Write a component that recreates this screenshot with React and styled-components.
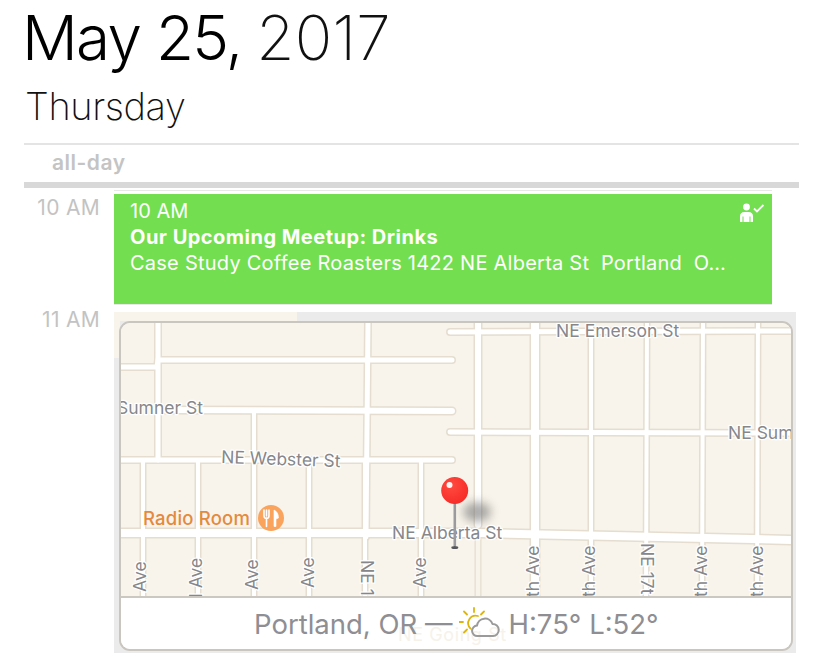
import React from "react";
import styled, { createGlobalStyle } from "styled-components";

const Global = createGlobalStyle`
  html, body { margin: 0; padding: 0; background: #fff; overflow: hidden; }
  body { font-family: Inter, "Liberation Sans", sans-serif; }
`;
const Page = styled.div`
  width: 826px; height: 653px; display: flex; flex-direction: column;
  box-sizing: border-box; padding: 0 27px 0 24px; overflow: hidden;
`;
const Title = styled.h1`
  margin: 0; height: 80px; font-size: 62px; line-height: 76px; font-weight: 360;
  letter-spacing: -1.7px; color: #000; white-space: nowrap; margin-left: -2px;
`;
const Year = styled.span`font-weight: 200; color: #111; letter-spacing: 0.2px; margin-left: -1px;`;
const Day = styled.h2`
  margin: 0; height: 63px; font-size: 38px; line-height: 52px; font-weight: 200;
  letter-spacing: -0.4px; color: #111; padding-left: 1px;
`;
const AllDay = styled.div`
  border-top: 2px solid #e4e4e4; border-bottom: 6px solid #d8d8d8;
  padding-left: 28px; font-size: 21px; line-height: 36px; font-weight: 600;
  color: #c4c4c4; height: 37px; letter-spacing: 0.5px;
`;
const Grid = styled.div`
  display: grid; grid-template-columns: 76px 1fr; column-gap: 14px; flex: 1;
  grid-template-rows: 124px 341px;
`;
const Hour = styled.div`
  text-align: right; font-size: 21px; color: #c3c3c3; line-height: 22px;
  margin-top: ${p => p.$top}px; letter-spacing: 0.3px; font-weight: 400;
`;
const EventSlot = styled.div`
  padding-top: 3px;
`;
const Event = styled.div`
  position: relative; width: 658px; height: 110px; box-sizing: border-box;
  background: #72de50; color: #fff; padding: 4px 44px 0 16px; font-size: 20px;
  line-height: 26px; box-shadow: 0 -3px 0 0 #fff, 0 -4px 0 0 #e8e8e8, 0 1px 0 #e8e8e8;
  margin-top: 3px;
`;
const EventTime = styled.div`letter-spacing: 0;`;
const EventTitle = styled.div`font-weight: 700; letter-spacing: 0.48px; font-size: 20px;`;
const EventPlace = styled.div`
  white-space: pre; overflow: hidden; text-overflow: ellipsis; letter-spacing: 0.24px;
  width: 596px;
`;
const Attendee = styled.svg`position: absolute; top: 8px; right: 6px;`;
const MapFrame = styled.div`
  width: 682px; height: 341px; box-sizing: border-box; padding: 9px 3px 2px 5px; display: flex;
  background:
    linear-gradient(#f8f4eb, #f8f4eb) 0 0 / 183px 9px no-repeat,
    linear-gradient(#f8f4eb, #f8f4eb) 0 0 / 6px 46px no-repeat,
    #ebebeb;
`;
const MapCard = styled.div`
  flex: 1; display: flex; flex-direction: column; border: 2px solid #c9c6c0; border-radius: 11px;
  overflow: hidden; background: #f8f4eb;
`;
const MapSvg = styled.svg`display: block; width: 670px; height: 273px; flex: none;`;
const Footer = styled.div`
  position: relative; isolation: isolate; flex: 1; background: #fff; border-top: 2px solid #cbc8c2;
  display: flex; align-items: center; font-size: 27.5px; color: #8e8e93; padding-left: 133px;
  white-space: nowrap;
`;
const Ghost = styled.span`
  position: absolute; z-index: -1; left: 277px; top: 26px; font-size: 18px; color: #f6f2ea; letter-spacing: 0.6px;
`;
const Temp = styled.span`margin-left: 9px;`;
const Dash = styled.span``;
const Weather = styled.svg`flex: none; margin-left: 6px; margin-top: -2px;`;

const roads = [
  ["M119 367H157L158 360L452 360", 5],
  ["M160 410L452 411", 6],
  ["M119 460H452", 5],
  ["M450 332L792 331", 5],
  ["M450 432L792 433", 5],
  ["M119 533L480 533L792 540", 8],
  ["M158 320L158 460", 5],
  ["M368 320L366 537", 5],
  ["M254 410L254 600", 4],
  ["M143 460L143 600", 4],
  ["M198 460L198 600", 4],
  ["M309 460L309 600", 4],
  ["M365 460L365 600", 4],
  ["M421 460L421 600", 4],
  ["M478 320V525", 6],
  ["M535 320V600", 8],
  ["M591 320L591 600", 4],
  ["M647 320L646 600", 4],
  ["M703 320L702 600", 4],
  ["M758 320L757 600", 4],
];
const labels = [
  ["NE Emerson St", 556, 337, 0],
  ["Sumner St", 117, 414, 0],
  ["NE Webster St", 221, 463, 2],
  ["NE Sum", 728, 439, 0],
  ["NE Alberta St", 392, 539, 0],
];
const sideLabels = [
  ["Ave", 146, 592, -90], ["d Ave", 202, 604, -90], ["Ave", 258, 590, -90], ["Ave", 314, 588, -90],
  ["NE 1", 361, 560, 90], ["Ave", 426, 588, -90],
  ["th Ave", 539, 597, -90], ["th Ave", 595, 597, -90], ["NE 17t", 641, 543, 90],
  ["th Ave", 707, 597, -90], ["th Ave", 763, 597, -90],
];
const Road = styled.path`fill: none; stroke-linecap: round;`;
const Street = styled.text`
  font-family: Inter, "Liberation Sans", sans-serif; font-size: 17.5px; fill: #87878a;
  stroke: #fff; stroke-width: 2.5px; paint-order: stroke; stroke-linejoin: round;
`;
const Place = styled.text`
  font-family: Inter, "Liberation Sans", sans-serif; font-size: 18.5px; font-weight: 500; fill: #e58a3c;
  letter-spacing: 0.2px;
`;

function PlaceMap() {
  return (
    <MapSvg viewBox="121 323 670 273">
      <defs>
        <filter id="blur" x="-50%" y="-50%" width="200%" height="200%"><feGaussianBlur stdDeviation="5" /></filter>
        <radialGradient id="ball" cx="38%" cy="32%" r="75%">
          <stop offset="0" stopColor="#ff4a40" /><stop offset="1" stopColor="#f62a26" />
        </radialGradient>
      </defs>
      <rect x="121" y="323" width="670" height="273" fill="#f8f4eb" />
      {roads.map(([d, w], i) => <Road key={"a" + i} d={d} stroke="#e4ddd0" strokeWidth={w + 3} />)}
      {roads.map(([d, w], i) => <Road key={"b" + i} d={d} stroke="#fff" strokeWidth={w} />)}
      <path d="M478 537V600" stroke="#e4ddd0" strokeWidth="7" fill="none" />
      <path d="M478 537V600" stroke="#f8f4eb" strokeWidth="4.5" fill="none" />
      <ellipse cx="477" cy="512" rx="14" ry="10" fill="#777" opacity=".6" filter="url(#blur)" />
      {labels.map(([t, x, y, r]) => (
        <Street key={t} x={x} y={y} transform={r ? `rotate(${r} ${x} ${y})` : undefined}>{t}</Street>
      ))}
      {sideLabels.map(([t, x, y, r], i) => (
        <Street key={i} x={x} y={y} transform={`rotate(${r} ${x} ${y})`}>{t}</Street>
      ))}
      <Place x="143" y="525">Radio Room</Place>
      <circle cx="271" cy="518" r="13" fill="#f9a35c" />
      <path d="M264 510v6M266.5 510v6M269 510v6M264 515.5q0 3 2.5 3t2.5-3M266.5 518v8.5" stroke="#fff" strokeWidth="1.6" fill="none" strokeLinecap="round" />
      <path d="M274 526.5V510q4.5 2 4.5 8l-2.5 1v7.5z" fill="#fff" stroke="#fff" strokeWidth=".6" strokeLinejoin="round" />
      <rect x="453.5" y="500" width="2.6" height="46" fill="#9b9b9f" />
      <ellipse cx="454.8" cy="547.5" rx="3.5" ry="1.5" fill="#55555a" />
      <circle cx="454.7" cy="490.5" r="13.5" fill="url(#ball)" />
      <circle cx="449.5" cy="485" r="3" fill="#fff" opacity=".95" />
    </MapSvg>
  );
}

export default function App() {
  return (
    <Page>
      <Global />
      <Title>May 25, <Year>2017</Year></Title>
      <Day>Thursday</Day>
      <AllDay>all-day</AllDay>
      <Grid>
        <Hour $top={9}>10 AM</Hour>
        <EventSlot>
          <Event>
            <EventTime>10 AM</EventTime>
            <EventTitle>Our Upcoming Meetup: Drinks</EventTitle>
            <EventPlace>Case Study Coffee Roasters 1422 NE Alberta St  Portland  O…</EventPlace>
            <Attendee width="26" height="22" viewBox="0 0 26 22">
              <circle cx="6.5" cy="5" r="3.4" fill="#fff" />
              <path d="M0 20V14.5Q0 10 4.5 10H8.5Q13 10 13 14.5V20H10.5V14.5H9.5V20H3.5V14.5H2.5V20Z" fill="#fff" />
              <path d="M14 6.5L17 9.5L23.5 3" stroke="#fff" strokeWidth="1.8" fill="none" />
            </Attendee>
          </Event>
        </EventSlot>
        <Hour $top={-3}>11 AM</Hour>
        <MapFrame>
          <MapCard>
            <PlaceMap />
            <Footer>
              <Ghost>NE Going St</Ghost>
              <Dash>Portland, OR —</Dash>
              <Weather width="41" height="31" viewBox="0 0 41 31">
                <g stroke="#dcb60f" strokeWidth="1.8" fill="none" strokeLinecap="round">
                  <path d="M15 1v4M5 4.5l3 3M25 4.5l-3 3M0 15h4M5 25.5l3-3" />
                  <path d="M19 9a7.5 7.5 0 0 0-7.5 12.5" />
                </g>
                <path d="M18.5 29a5.2 5.2 0 0 1-.5-10.4a8 8 0 0 1 15.5-1.6a6 6 0 0 1 .5 12z" fill="none" stroke="#9a9a9a" strokeWidth="2" strokeLinejoin="round" />
              </Weather>
              <Temp>H:75° L:52°</Temp>
            </Footer>
          </MapCard>
        </MapFrame>
      </Grid>
    </Page>
  );
}
